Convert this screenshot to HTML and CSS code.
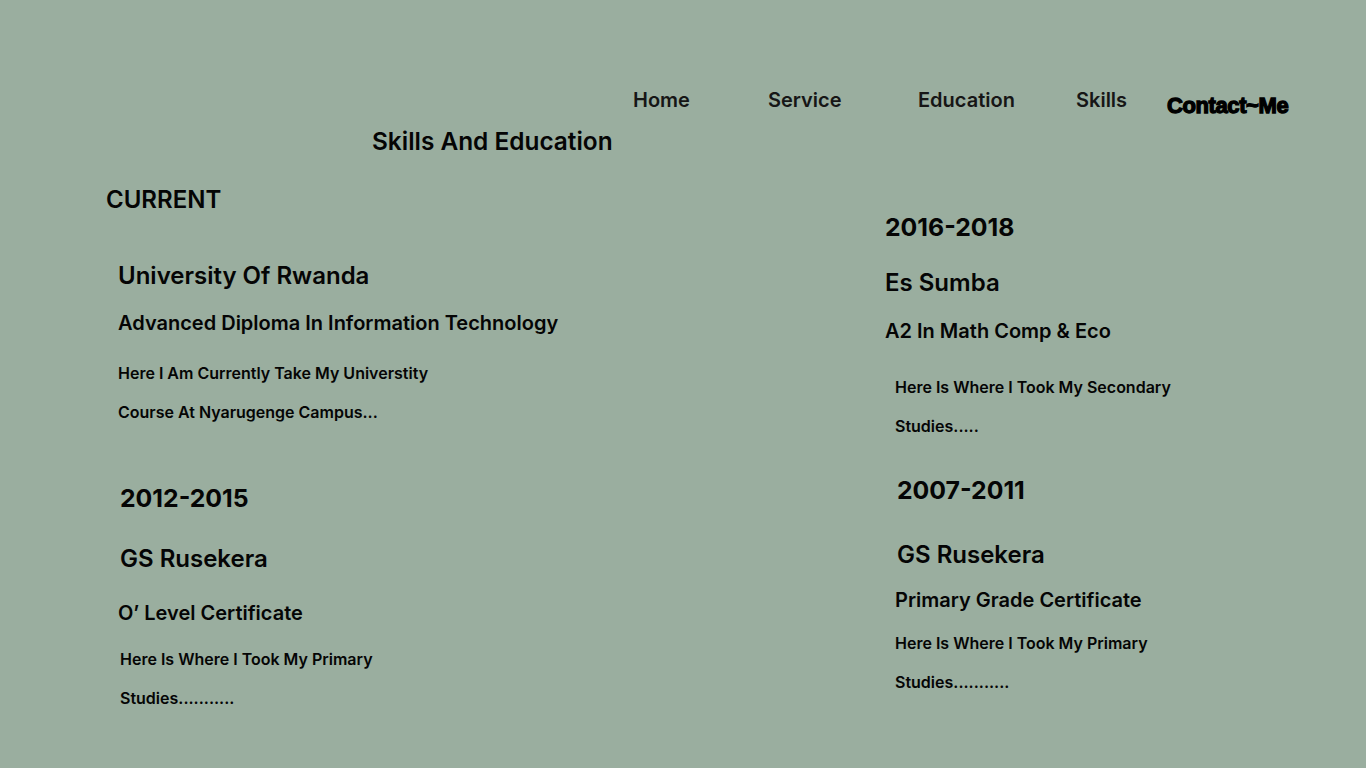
FILE: index.html
```html
<!DOCTYPE html>
<html lang="en">
<head>
<meta charset="utf-8">
<title>Skills And Education</title>
<link rel="stylesheet" href="styles.css">
</head>
<body>
<header class="nav">
  <a class="nav-link home" href="#">Home</a>
  <a class="nav-link service" href="#">Service</a>
  <a class="nav-link education" href="#">Education</a>
  <a class="nav-link skills" href="#">Skills</a>
  <a class="nav-contact" href="#">Contact~Me</a>
</header>
<h1 class="page-title">Skills And Education</h1>
<main class="grid">
  <section class="col col-left">
    <h2 class="label">CURRENT</h2>
    <div class="entry uni">
      <h3 class="school">University Of Rwanda</h3>
      <h4 class="degree">Advanced Diploma In Information Technology</h4>
      <p class="desc">Here I Am Currently Take My Universtity Course At Nyarugenge Campus...</p>
    </div>
    <div class="entry olevel">
      <h3 class="year">2012-2015</h3>
      <h3 class="school s2">GS Rusekera</h3>
      <h4 class="degree d2">O’ Level Certificate</h4>
      <p class="desc p2">Here Is Where I Took My Primary Studies...........</p>
    </div>
  </section>
  <section class="col col-right">
    <div class="entry sumba">
      <h3 class="year">2016-2018</h3>
      <h3 class="school s3">Es Sumba</h3>
      <h4 class="degree d3">A2 In Math Comp &amp; Eco</h4>
      <p class="desc p3">Here Is Where I Took My Secondary Studies.....</p>
    </div>
    <div class="entry primary">
      <h3 class="year y4">2007-2011</h3>
      <h3 class="school s4">GS Rusekera</h3>
      <h4 class="degree d4">Primary Grade Certificate</h4>
      <p class="desc p4">Here Is Where I Took My Primary Studies...........</p>
    </div>
  </section>
</main>
</body>
</html>
```

FILE: styles.css
```css
* { box-sizing: border-box; }
html, body {
  margin: 0;
  padding: 0;
}
body {
  background: #9aae9f;
  font-family: Inter, "Noto Sans", sans-serif;
  color: #050505;
  min-height: 768px;
}
h1, h2, h3, h4, p { margin: 0; font-weight: 600; }

.nav {
  display: flex;
  align-items: flex-start;
  padding: 80px 0 0 633px;
  height: 120px;
}
.nav-link {
  font-size: 20px;
  line-height: 40px;
  font-weight: 600;
  color: #161616;
  text-decoration: none;
}
.home { width: 135px; }
.service { width: 150px; }
.education { width: 158px; }
.skills { width: 91px; }
.nav-contact {
  margin-top: 6px;
  font-family: "Liberation Sans", Arial, sans-serif;
  font-weight: 700;
  font-size: 22px;
  line-height: 40px;
  letter-spacing: -0.4px;
  -webkit-text-stroke: 1.3px #000;
  color: #000;
  text-decoration: none;
}

.page-title {
  font-size: 24.4px;
  line-height: 30px;
  margin: 6px 0 0 372px;
}

.grid {
  display: grid;
  grid-template-columns: 779px 1fr;
  align-items: start;
  padding-left: 106px;
  margin-top: 29px;
}
.col-right { padding-top: 27px; }

.label, .school, .year {
  font-size: 24px;
  line-height: 30px;
}
.year { font-weight: 700; font-size: 24.8px; }
.degree {
  font-size: 20px;
  line-height: 24px;
}
.desc {
  font-size: 16px;
  line-height: 39px;
  max-width: 340px;
}

/* left column */
.uni { margin: 46px 0 0 12px; }
.uni .degree { margin-top: 20px; }
.uni .desc { margin-top: 18.5px; }

.olevel { margin: 51.5px 0 0 14px; }
.olevel .s2 { margin-top: 31px; }
.olevel .d2 { margin: 27px 0 0 -2px; }
.olevel .p2 { margin-top: 14.5px; }

/* right column */
.sumba .s3 { margin-top: 26px; }
.sumba .d3 { margin-top: 21px; }
.sumba .p3 { margin: 24.5px 0 0 10px; }

.primary { margin: 29.5px 0 0 10px; }
.primary .y4 { margin-left: 2px; }
.primary .s4 { margin: 35px 0 0 2px; }
.primary .d4 { margin-top: 18px; }
.primary .p4 { margin-top: 11.5px; }
```
